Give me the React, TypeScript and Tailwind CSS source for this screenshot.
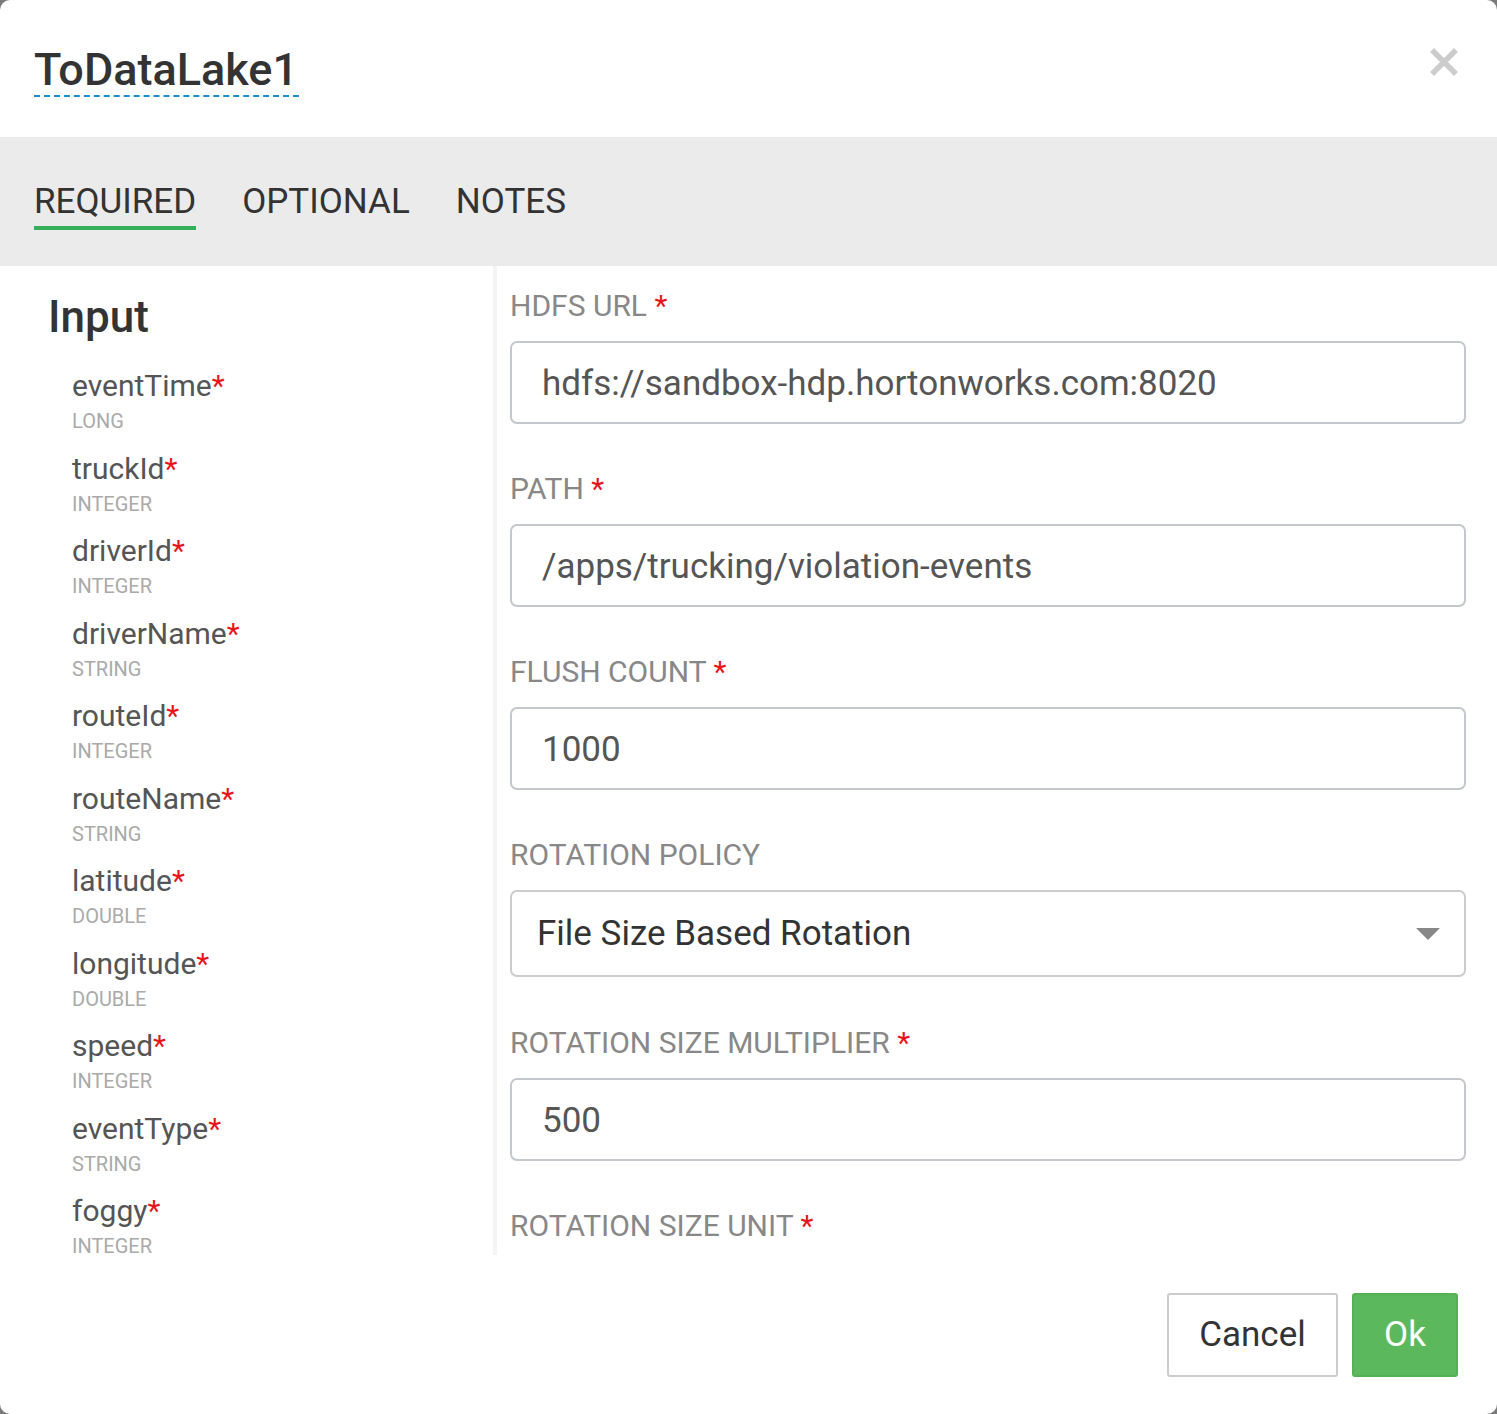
import React from "react";

const fields: [string, string][] = [
  ["eventTime", "LONG"],
  ["truckId", "INTEGER"],
  ["driverId", "INTEGER"],
  ["driverName", "STRING"],
  ["routeId", "INTEGER"],
  ["routeName", "STRING"],
  ["latitude", "DOUBLE"],
  ["longitude", "DOUBLE"],
  ["speed", "INTEGER"],
  ["eventType", "STRING"],
  ["foggy", "INTEGER"],
];

function Label({ text, req = true }: { text: string; req?: boolean }) {
  return (
    <div className="text-[30px] leading-[36px] text-[#888] uppercase">
      {text}
      {req && <span className="text-[#e8141b]"> *</span>}
    </div>
  );
}

function TextInput({ value }: { value: string }) {
  return (
    <div className="mt-[17px] h-[83px] border-2 border-[#c4c7cc] rounded-[7px] flex items-center px-[30px] pt-[3px] text-[35px] text-[#555]">
      {value}
    </div>
  );
}

export default function App() {
  return (
    <div className="w-[1497px] h-[1414px] bg-[#7a7a7a]" style={{ fontFamily: "Roboto, 'Noto Sans', sans-serif" }}>
      <div className="w-full h-full bg-white rounded-[10px] overflow-hidden flex flex-col">
        {/* Header */}
        <div className="h-[137px] shrink-0 flex justify-between pl-[34px] pr-[38px] pt-[45px]">
          <div>
            <div className="text-[45px] leading-[50px] font-medium text-[#333] border-b-2 border-dashed border-[#1a8fd0] pr-[1px]">
              ToDataLake1
            </div>
          </div>
          <svg width="30" height="30" viewBox="0 0 30 30" className="mt-[2px]">
            <path d="M3 3 L27 27 M27 3 L3 27" stroke="#cccccc" strokeWidth="5.5" strokeLinecap="butt" />
          </svg>
        </div>

        {/* Tabs */}
        <div className="h-[129px] shrink-0 bg-[#ebebeb] flex items-start gap-[46px] pl-[34px] pt-[45px]">
          <div className="flex flex-col">
            <div className="text-[35px] leading-[40px] text-[#333]">REQUIRED</div>
            <div className="mt-[4px] h-[4px] bg-[#34b05a]" />
          </div>
          <div className="text-[35px] leading-[40px] text-[#333]">OPTIONAL</div>
          <div className="text-[35px] leading-[40px] text-[#333]">NOTES</div>
        </div>

        {/* Body */}
        <div className="h-[989px] shrink-0 flex">
          <div className="w-[497px] shrink-0 border-r-[4px] border-[#f4f4f4] pt-[29px]">
            <div className="pl-[48px] text-[44px] leading-[44px] font-medium text-[#333]">Input</div>
            <div className="mt-[29px] pl-[72px]">
              {fields.map(([name, type]) => (
                <div key={name} className="h-[82.5px]">
                  <div className="text-[30px] leading-[36px] text-[#555]">
                    {name}
                    <span className="text-[#e8141b]">*</span>
                  </div>
                  <div className="mt-[8px] text-[20px] leading-[18px] text-[#aaa]">{type}</div>
                </div>
              ))}
            </div>
          </div>
          <div className="flex-1 pl-[13px] pr-[31px] pt-[22px]">
            <Label text="HDFS URL" />
            <TextInput value="hdfs://sandbox-hdp.hortonworks.com:8020" />
            <div className="mt-[47px]">
              <Label text="PATH" />
              <TextInput value="/apps/trucking/violation-events" />
            </div>
            <div className="mt-[47px]">
              <Label text="FLUSH COUNT" />
              <TextInput value="1000" />
            </div>
            <div className="mt-[47px]">
              <Label text="ROTATION POLICY" req={false} />
              <div className="mt-[17px] h-[87px] border-2 border-[#cccccc] rounded-[7px] flex items-center justify-between pl-[25px] pr-[24px]">
                <span className="text-[35px] text-[#333] pt-[2px]">File Size Based Rotation</span>
                <svg width="24" height="12" viewBox="0 0 24 12">
                  <path d="M0 0 H24 L12 12 Z" fill="#888" />
                </svg>
              </div>
            </div>
            <div className="mt-[48px]">
              <Label text="ROTATION SIZE MULTIPLIER" />
              <TextInput value="500" />
            </div>
            <div className="mt-[47px]">
              <Label text="ROTATION SIZE UNIT" />
            </div>
          </div>
        </div>

        {/* Footer */}
        <div className="flex-1 flex justify-end items-start gap-[14px] pt-[38px] pr-[39px]">
          <button className="w-[171px] h-[84px] border-2 border-[#cccccc] rounded-[3px] bg-white text-[35px] text-[#333]">
            Cancel
          </button>
          <button className="w-[106px] h-[84px] border-2 border-[#55b155] rounded-[3px] bg-[#5cb85c] text-[35px] text-white">
            Ok
          </button>
        </div>
      </div>
    </div>
  );
}
